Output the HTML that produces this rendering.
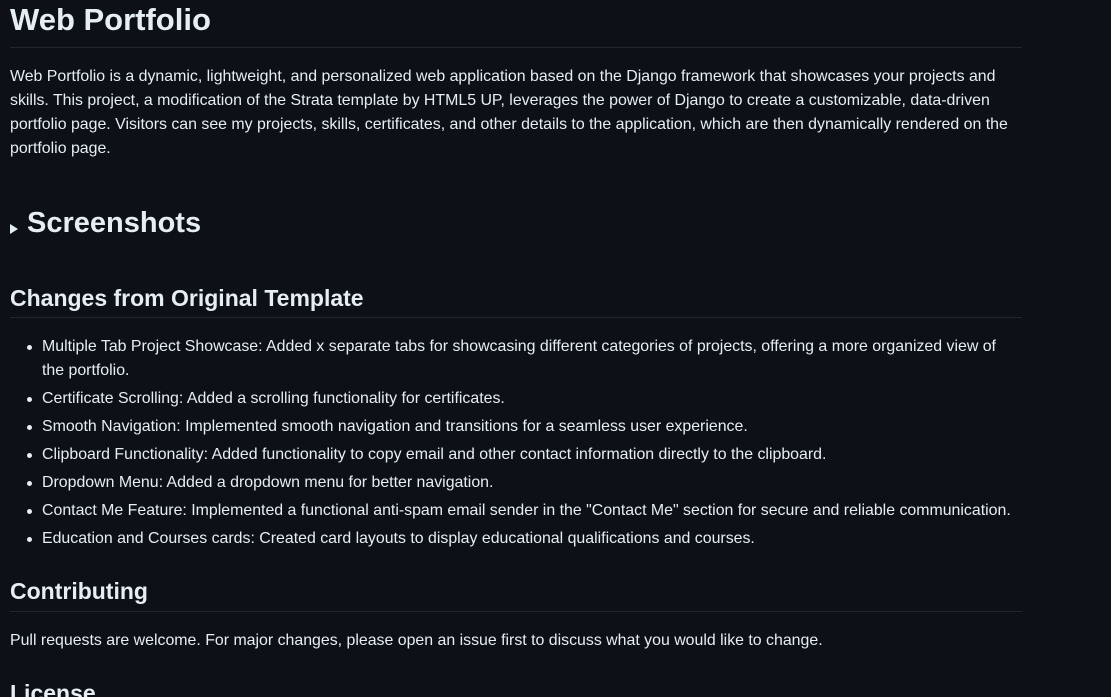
<!DOCTYPE html>
<html style="overflow:hidden;height:697px"><head><meta charset="utf-8"><style>
body{margin:0;background:#0d1117;color:#e6edf3;font-family:"Liberation Sans",sans-serif;width:1111px;height:697px;overflow:hidden;position:relative}
.a{position:absolute;left:10px;white-space:nowrap}
.p{font-size:15.9px;line-height:24px}
.hr{position:absolute;left:10px;width:1012px;height:1px;background:#21262d}
.li{position:absolute;left:42px;font-size:15.9px;line-height:24px;white-space:nowrap}
.li:before{content:"";position:absolute;left:-15px;top:10px;width:5px;height:5px;border-radius:50%;background:#e6edf3}
</style></head><body>
<div class="a" style="top:1px;font-size:31px;line-height:38px;font-weight:600">Web Portfolio</div>
<div class="hr" style="top:47px"></div>
<div class="a p" style="top:65px">Web Portfolio is a dynamic, lightweight, and personalized web application based on the Django framework that showcases your projects and<br>skills. This project, a modification of the Strata template by HTML5 UP, leverages the power of Django to create a customizable, data-driven<br>portfolio page. Visitors can see my projects, skills, certificates, and other details to the application, which are then dynamically rendered on the<br>portfolio page.</div>
<svg style="position:absolute;left:10px;top:224px" width="9" height="10"><path d="M0 0L8 5L0 10Z" fill="#e6edf3"/></svg>
<div class="a" style="left:27px;top:204px;font-size:29px;line-height:38px;font-weight:600">Screenshots</div>
<div class="a" style="top:283px;font-size:23px;line-height:30px;font-weight:600">Changes from Original Template</div>
<div class="hr" style="top:317px"></div>
<div class="li" style="top:335px">Multiple Tab Project Showcase: Added x separate tabs for showcasing different categories of projects, offering a more organized view of<br>the portfolio.</div>
<div class="li" style="top:387px">Certificate Scrolling: Added a scrolling functionality for certificates.</div>
<div class="li" style="top:415px">Smooth Navigation: Implemented smooth navigation and transitions for a seamless user experience.</div>
<div class="li" style="top:443px">Clipboard Functionality: Added functionality to copy email and other contact information directly to the clipboard.</div>
<div class="li" style="top:471px">Dropdown Menu: Added a dropdown menu for better navigation.</div>
<div class="li" style="top:499px">Contact Me Feature: Implemented a functional anti-spam email sender in the "Contact Me" section for secure and reliable communication.</div>
<div class="li" style="top:527px">Education and Courses cards: Created card layouts to display educational qualifications and courses.</div>
<div class="a" style="top:576px;font-size:23px;line-height:30px;font-weight:600">Contributing</div>
<div class="hr" style="top:611px"></div>
<div class="a p" style="top:629px">Pull requests are welcome. For major changes, please open an issue first to discuss what you would like to change.</div>
<div class="a" style="top:678px;font-size:23px;line-height:30px;font-weight:600">License</div>
</body></html>
